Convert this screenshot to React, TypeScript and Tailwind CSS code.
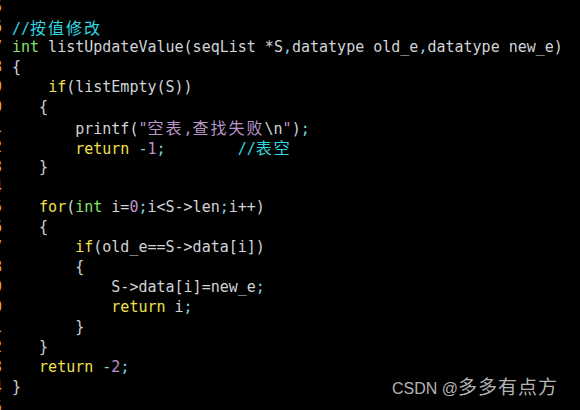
import React from 'react'

// vim colours (gnome-terminal tango-ish)
const K = ({ children }: { children: React.ReactNode }) => <span className="text-[#f2e14c]">{children}</span>
const T = ({ children }: { children: React.ReactNode }) => <span className="text-[#8ae26a]">{children}</span>
const C = ({ children }: { children: React.ReactNode }) => <span className="text-[#2fd8e0]">{children}</span>
const S = ({ children }: { children: React.ReactNode }) => <span className="text-[#b994c8]">{children}</span>
const P = ({ children }: { children: React.ReactNode }) => <span className="text-[#7fd3e3]">{children}</span>
// double-width cjk cells
const Z = ({ children }: { children: React.ReactNode }) => (
  <span className="font-['Noto_Sans_CJK_SC',sans-serif] text-[16px] tracking-[2px]">{children}</span>
)

const lines: React.ReactNode[] = [
  '',
  <C>//<Z>按值修改</Z></C>,
  <>
    <T>int</T> listUpdateValue(seqList *S<P>,</P>datatype old_e<P>,</P>datatype new_e)
  </>,
  '{',
  <>
    {'    '}<K>if</K>(listEmpty(S))
  </>,
  '   {',
  <>
    {'       printf('}<S>"<Z>空表</Z>,<Z>查找失败</Z></S>{'\\n'}<S>"</S>)<P>;</P>
  </>,
  <>
    {'       '}<K>return</K> <P>-</P><S>1</S><P>;</P>{'        '}<C>//<Z>表空</Z></C>
  </>,
  '   }',
  '',
  <>
    {'   '}<K>for</K>(<T>int</T> i=<S>0</S><P>;</P>i&lt;S-&gt;len<P>;</P>i++)
  </>,
  '   {',
  <>
    {'       '}<K>if</K>(old_e==S-&gt;data[i])
  </>,
  '       {',
  <>
    {'           '}S-&gt;data[i]=new_e<P>;</P>
  </>,
  <>
    {'           '}<K>return</K> i<P>;</P>
  </>,
  '       }',
  '   }',
  <>
    {'   '}<K>return</K> <P>-</P><S>2</S><P>;</P>
  </>,
  '}',
  '',
]

export default function App() {
  return (
    <div className="relative w-[580px] h-[410px] overflow-hidden bg-black">
      <div className="-mt-[3px] -ml-[25px] flex flex-col font-['DejaVu_Sans_Mono',monospace] text-[15px] text-[#d0d4d6]">
        {lines.map((line, i) => (
          <div key={i} className="flex h-[20px] leading-[20px] whitespace-pre">
            <span className="w-[37px] shrink-0 pr-[10px] text-right text-[#e3ac36]">{95 + i}</span>
            <span>{line}</span>
          </div>
        ))}
      </div>
      <div className="absolute left-[392px] top-[376px] leading-[20px] text-[#b4b4b4] whitespace-nowrap">
        <span className="font-['Liberation_Sans',sans-serif] text-[16px]">CSDN @</span>
        <span className="font-['Noto_Sans_CJK_SC',sans-serif] text-[19px] tracking-[1px]">多多有点方</span>
      </div>
    </div>
  )
}
